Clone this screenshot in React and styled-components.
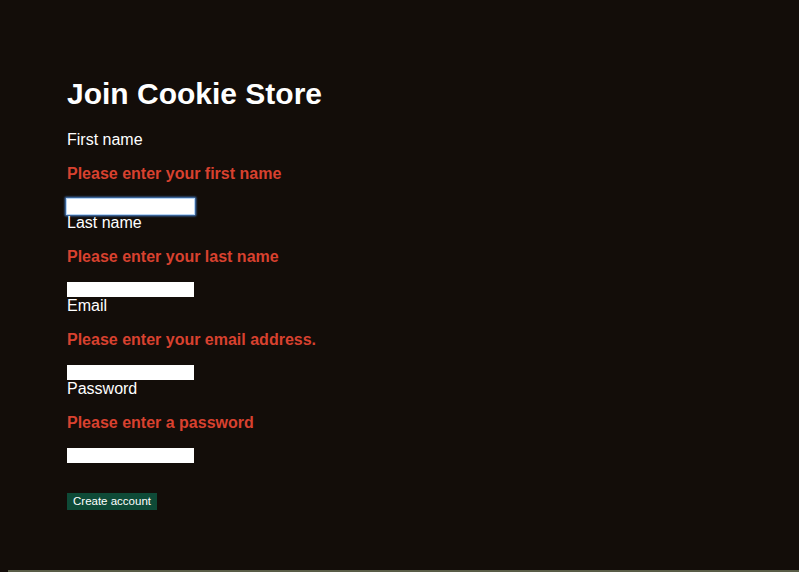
import React from 'react';
import styled, { createGlobalStyle } from 'styled-components';

const GlobalStyle = createGlobalStyle`
    html, body {
        margin: 0;
        height: 100%;
        background-color: #130d09;
    }
    #root {
        height: 100%;
    }
`;

const fields = [
    { id: "first", label: "First name", error: "Please enter your first name", focused: true },
    { id: "last", label: "Last name", error: "Please enter your last name" },
    { id: "email", label: "Email", error: "Please enter your email address." },
    { id: "password", label: "Password", error: "Please enter a password", type: "password" },
];

const App = () => {
    return (
        <Page>
            <GlobalStyle />
            <Main>
                <Title>Join Cookie Store</Title>
                <form onSubmit={e => e.preventDefault()}>
                    {fields.map(field => (
                        <Field key={field.id}>
                            <Label htmlFor={field.id}>{field.label}</Label>
                            <Error>{field.error}</Error>
                            <Input id={field.id} type={field.type || "text"} $focused={field.focused} />
                        </Field>
                    ))}
                    <Button type="submit">Create account</Button>
                </form>
            </Main>
            <Footer />
        </Page>
    );
};

const Page = styled.div`
    min-height: 100%;
    display: flex;
    flex-direction: column;
    font-family: "Liberation Sans", Arial, Helvetica, sans-serif;
    color: #ffffff;
`;

const Main = styled.main`
    flex: 1;
    padding: 57px 67px 0;
`;

const Title = styled.h1`
    margin: 20px 0;
    font-size: 30px;
    line-height: 34px;
    font-weight: bold;
`;

const Field = styled.div`
    display: flex;
    flex-direction: column;
    align-items: flex-start;
`;

const Label = styled.label`
    display: block;
    font-size: 16px;
    line-height: 18px;
`;

const Error = styled.p`
    margin: 16px 0;
    font-size: 16px;
    line-height: 18px;
    font-weight: bold;
    color: #d8412f;
`;

const Input = styled.input`
    width: 127px;
    height: 15px;
    padding: 0;
    border: none;
    background: #ffffff;
    outline: none;
    box-shadow: ${p => p.$focused ? "0 0 0 1px #b8d4f4, 0 0 2px 2px #4c8ad8" : "none"};
`;

const Button = styled.button`
    margin-top: 30px;
    height: 17px;
    padding: 0 6px;
    border: none;
    background-color: #0e4a37;
    color: #ffffff;
    font-family: "Liberation Sans", Arial, Helvetica, sans-serif;
    font-size: 11.5px;
    line-height: 17px;
    cursor: pointer;
`;

const Footer = styled.div`
    height: 2px;
    margin-left: 8px;
    background-color: #595d47;
`;

export default App;
